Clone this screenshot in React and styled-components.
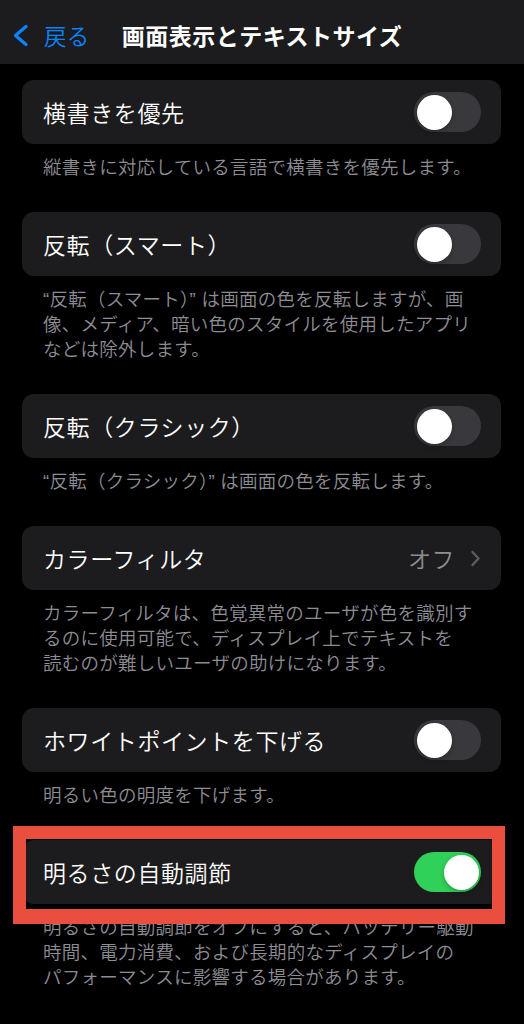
import React from "react";
import styled, { createGlobalStyle } from "styled-components";

const Global = createGlobalStyle`
  html, body { margin: 0; padding: 0; background: #000; }
  body { font-family: "Liberation Sans", "Noto Sans CJK JP", sans-serif; -webkit-font-smoothing: antialiased; }
  * { box-sizing: border-box; }
`;

const Page = styled.div`
  width: 524px;
  min-height: 1024px;
  background: #000;
  overflow: hidden;
`;

const NavBar = styled.header`
  position: relative;
  height: 64px;
  padding-top: 6px;
  background: #1c1c1e;
  display: flex;
  align-items: center;
  justify-content: center;
`;

const BackButton = styled.div`
  position: absolute;
  left: 12px;
  top: 6px;
  bottom: 0;
  display: flex;
  align-items: center;
  gap: 15px;
  color: #0a84ff;
  font-size: 22.5px;
  font-weight: 350;
  letter-spacing: 0.3px;
`;

const Title = styled.h1`
  margin: 0;
  color: #fff;
  font-size: 23px;
  font-weight: 700;
  letter-spacing: 0.5px;
`;

const Content = styled.main`
  padding: 16px 23px 40px 22px;
  display: flex;
  flex-direction: column;
  gap: 32px;
`;

const Section = styled.section`
  position: relative;
`;

const Card = styled.div`
  position: relative;
  height: 64px;
  background: #1c1c1e;
  border-radius: 12px;
  padding: 0 20px 0 21px;
  display: flex;
  align-items: center;
  justify-content: space-between;
`;

const Label = styled.span`
  color: #fff;
  font-size: 23px;
  font-weight: 350;
  letter-spacing: 0.6px;
  white-space: nowrap;
`;

const Footer = styled.p`
  margin: 0;
  padding: 11px 0 0 21px;
  color: #8d8d93;
  font-size: 18.5px;
  font-weight: 350;
  line-height: 25px;
  letter-spacing: 0.25px;
  white-space: nowrap;
`;

const Track = styled.div`
  width: 67px;
  height: 40px;
  border-radius: 20px;
  background: ${(p) => (p.$on ? "#30d158" : "#39393d")};
  padding: 2.5px;
  display: flex;
  justify-content: ${(p) => (p.$on ? "flex-end" : "flex-start")};
`;

const Knob = styled.div`
  width: 35px;
  height: 35px;
  border-radius: 50%;
  background: #fff;
  box-shadow: 0 2px 5px rgba(0, 0, 0, 0.25);
`;

const Value = styled.div`
  display: flex;
  align-items: center;
  gap: 15px;
  color: #8d8d93;
  font-size: 23px;
  font-weight: 350;
  letter-spacing: 0.5px;
`;

const Highlight = styled.div`
  position: absolute;
  top: -14px;
  left: -9px;
  right: -4px;
  height: 98px;
  border: 13px solid #e94e3f;
  border-bottom-width: 15px;
  pointer-events: none;
`;

const Toggle = ({ on }) => (
  <Track $on={on}>
    <Knob />
  </Track>
);

const BackChevron = () => (
  <svg width="17" height="23" viewBox="0 0 17 23">
    <path d="M14 2.5 L3.5 11.5 L14 20.5" fill="none" stroke="#0a84ff" strokeWidth="3.3" strokeLinecap="round" strokeLinejoin="round" />
  </svg>
);

const Disclosure = () => (
  <svg width="11" height="17" viewBox="0 0 11 17">
    <path d="M2.5 2 L8.5 8.5 L2.5 15" fill="none" stroke="#5a5a5f" strokeWidth="2.5" strokeLinecap="round" strokeLinejoin="round" />
  </svg>
);

const items = [
  { label: "横書きを優先", toggle: false, footer: ["縦書きに対応している言語で横書きを優先します。"] },
  {
    label: "反転（スマート）",
    toggle: false,
    footer: [
      "“反転（スマート）” は画面の色を反転しますが、画",
      "像、メディア、暗い色のスタイルを使用したアプリ",
      "などは除外します。",
    ],
  },
  { label: "反転（クラシック）", toggle: false, footer: ["“反転（クラシック）” は画面の色を反転します。"] },
  {
    label: "カラーフィルタ",
    value: "オフ",
    footer: [
      "カラーフィルタは、色覚異常のユーザが色を識別す",
      "るのに使用可能で、ディスプレイ上でテキストを",
      "読むのが難しいユーザの助けになります。",
    ],
  },
  { label: "ホワイトポイントを下げる", toggle: false, footer: ["明るい色の明度を下げます。"] },
  {
    label: "明るさの自動調節",
    toggle: true,
    highlight: true,
    footer: [
      "明るさの自動調節をオフにすると、バッテリー駆動",
      "時間、電力消費、および長期的なディスプレイの",
      "パフォーマンスに影響する場合があります。",
    ],
  },
];

export default function App() {
  return (
    <Page>
      <Global />
      <NavBar>
        <BackButton>
          <BackChevron />
          <span>戻る</span>
        </BackButton>
        <Title>画面表示とテキストサイズ</Title>
      </NavBar>
      <Content>
        {items.map((it) => (
          <Section key={it.label}>
            <Card>
              <Label>{it.label}</Label>
              {it.value ? (
                <Value>
                  <span>{it.value}</span>
                  <Disclosure />
                </Value>
              ) : (
                <Toggle on={it.toggle} />
              )}
            </Card>
            <Footer>
              {it.footer.map((line, i) => (
                <React.Fragment key={i}>
                  {i > 0 && <br />}
                  {line}
                </React.Fragment>
              ))}
            </Footer>
            {it.highlight && <Highlight />}
          </Section>
        ))}
      </Content>
    </Page>
  );
}
